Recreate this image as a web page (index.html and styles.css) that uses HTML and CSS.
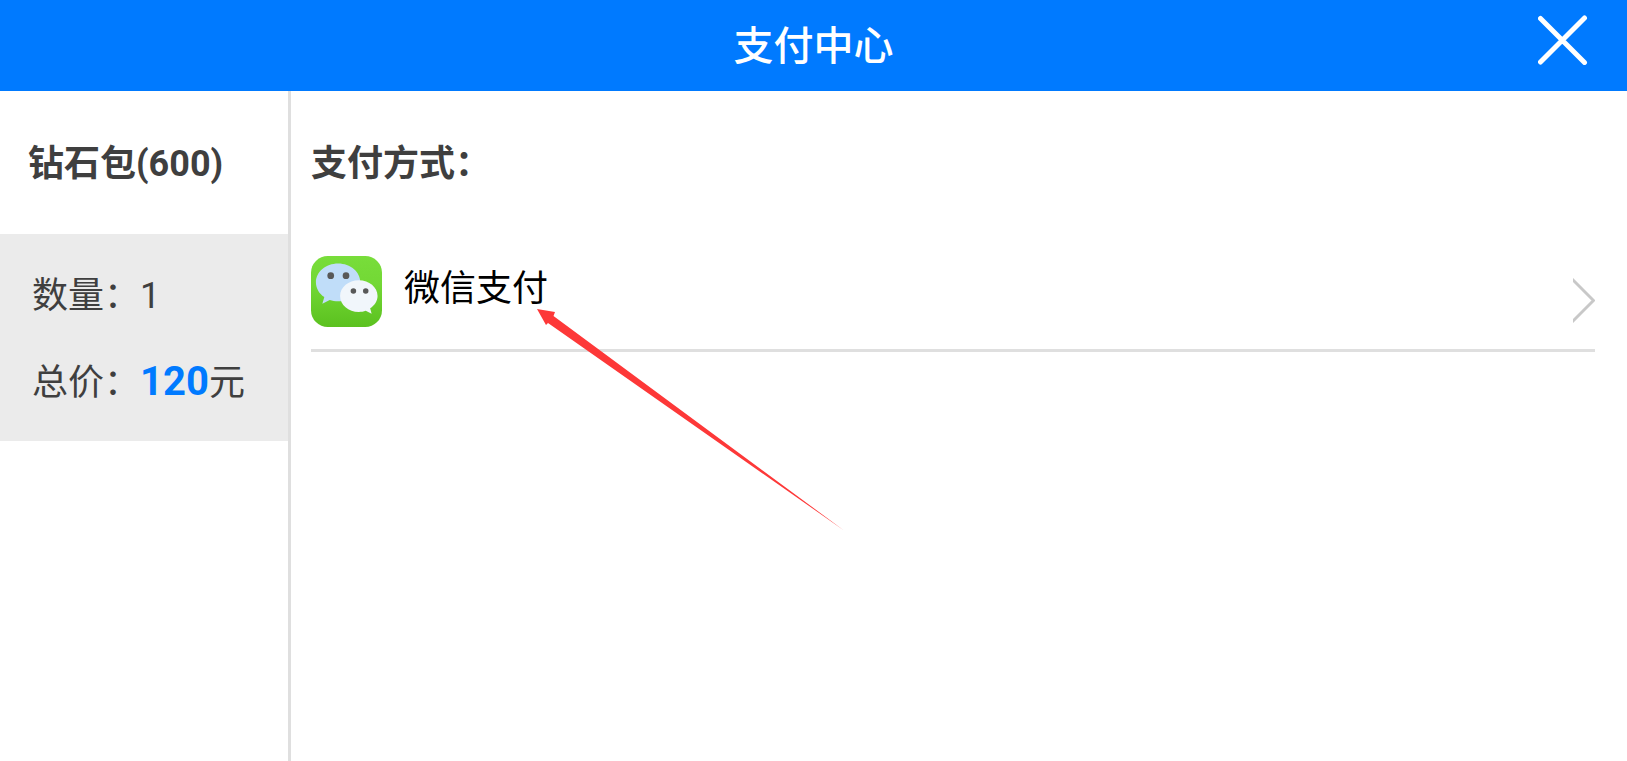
FILE: index.html
```
<!DOCTYPE html>
<html lang="zh-CN">
<head>
<meta charset="UTF-8" />
<meta name="viewport" content="width=device-width, initial-scale=1.0" />
<title>支付中心</title>
<link rel="stylesheet" href="styles.css">
</head>
<body>
<header class="header">
  <h1 class="header-title">支付中心</h1>
  <button class="close" type="button" aria-label="关闭">
    <svg width="50" height="50" viewBox="0 0 50 50">
      <path d="M2.500 3.500L46.500 47.500M46.500 3L2.500 47" />
    </svg>
  </button>
</header>
<div class="content">
  <aside class="order">
    <h2 class="title">钻石包(600)</h2>
    <div class="detail">
      <p>数量：1</p>
      <p>总价：<strong class="price">120</strong>元</p>
    </div>
  </aside>
  <main class="payment">
    <h2 class="title">支付方式：</h2>
    <div class="methods">
      <button class="method" type="button">
        <svg class="method-icon" width="71" height="71" viewBox="0 0 72 72">
          <defs>
            <linearGradient id="green" x1="0" y1="0" x2="0" y2="1">
              <stop offset="0" stop-color="#78dd3a" />
              <stop offset="0.4" stop-color="#73d835" />
              <stop offset="1" stop-color="#5bc11f" />
            </linearGradient>
          </defs>
          <rect width="72" height="72" rx="17" fill="url(#green)" />
          <path fill="#c0ddf9" d="M27.500 7.500C40 7.500 50 16 50 26.500S40 46 27.500 46C24.500 46 21.500 45.500 19 44.600L11.500 48.500L13.500 41.500C8 38 5 32.500 5 26.500C5 16 15 7.500 27.500 7.500Z" />
          <path fill="#f1f6fb" d="M48.500 24.500C59 24.500 67.500 31.500 67.500 40.500C67.500 45.500 64.500 50 60 53L61.500 58.500L55.500 55.500C53.500 56.300 51 56.700 48.500 56.700C38 56.700 29.500 49.500 29.500 40.500S38 24.500 48.500 24.500Z" />
          <g fill="#585858">
            <circle cx="20" cy="20" r="3.400" />
            <circle cx="35.500" cy="20" r="3.400" />
            <circle cx="43" cy="35.500" r="2.800" />
            <circle cx="55.500" cy="35.500" r="2.800" />
          </g>
        </svg>
        <span class="method-name">微信支付</span>
        <svg class="chevron" width="22" height="54" viewBox="0 0 22 54">
          <path d="M-1 5L20.500 26.500L-1 48" />
        </svg>
      </button>
      <svg class="pointer" width="308" height="223" viewBox="0 0 308 223">
        <path d="M0 0L18 3L16.500 7L307 221.500L11 14L9 16Z" />
      </svg>
    </div>
  </main>
</div>
</body>
</html>
```

FILE: styles.css
```
* {
  box-sizing: border-box;
}
body {
  margin: 0;
  min-height: 100vh;
  display: flex;
  flex-direction: column;
  font-family: Roboto, "Noto Sans CJK SC", sans-serif;
  font-size: 36px;
  color: #3f3f3f;
  background: #fff;
}
h1, h2, p {
  margin: 0;
}
button {
  padding: 0;
  border: none;
  background: none;
  font: inherit;
  cursor: pointer;
}
.header {
  display: grid;
  grid-template-columns: 1fr auto 1fr;
  padding: 15px 39px 12px;
  background: #007aff;
}
.header-title {
  grid-column: 2;
  font-size: 40px;
  font-weight: 500;
  line-height: 64px;
  color: #fff;
}
.close {
  justify-self: end;
  align-self: start;
}
.close svg {
  display: block;
  fill: none;
  stroke: #fff;
  stroke-width: 5;
  stroke-linecap: round;
}
.content {
  flex: 1;
  display: flex;
}
.order {
  width: 291px;
  border-right: 3px solid #dfdfdf;
}
.title {
  padding: 43px 0 40px;
  font-size: 36px;
  font-weight: 700;
  line-height: 60px;
}
.order .title {
  padding-left: 28px;
}
.detail {
  display: flex;
  flex-direction: column;
  gap: 26px;
  padding: 32px 0 28px 32px;
  line-height: 60px;
  background: #ebebeb;
}
.price {
  font-size: 40px;
  font-weight: 700;
  color: #007aff;
}
.payment {
  flex: 1;
  padding: 0 32px 0 20px;
}
.methods {
  position: relative;
}
.method {
  width: 100%;
  display: flex;
  align-items: flex-start;
  gap: 22px;
  padding: 22px 0 21px;
  border-bottom: 3px solid #dfdfdf;
  color: #000;
  text-align: left;
}
.method-name {
  flex: 1;
  line-height: 66px;
}
.method-icon {
  margin-bottom: 1px;
}
.chevron {
  align-self: flex-end;
  fill: none;
  stroke: #c8c8c8;
  stroke-width: 3;
}
/* red arrow lies over the list and its divider */
.pointer {
  position: absolute;
  left: 226px;
  top: 75px;
  fill: #fd3838;
  pointer-events: none;
}
```
